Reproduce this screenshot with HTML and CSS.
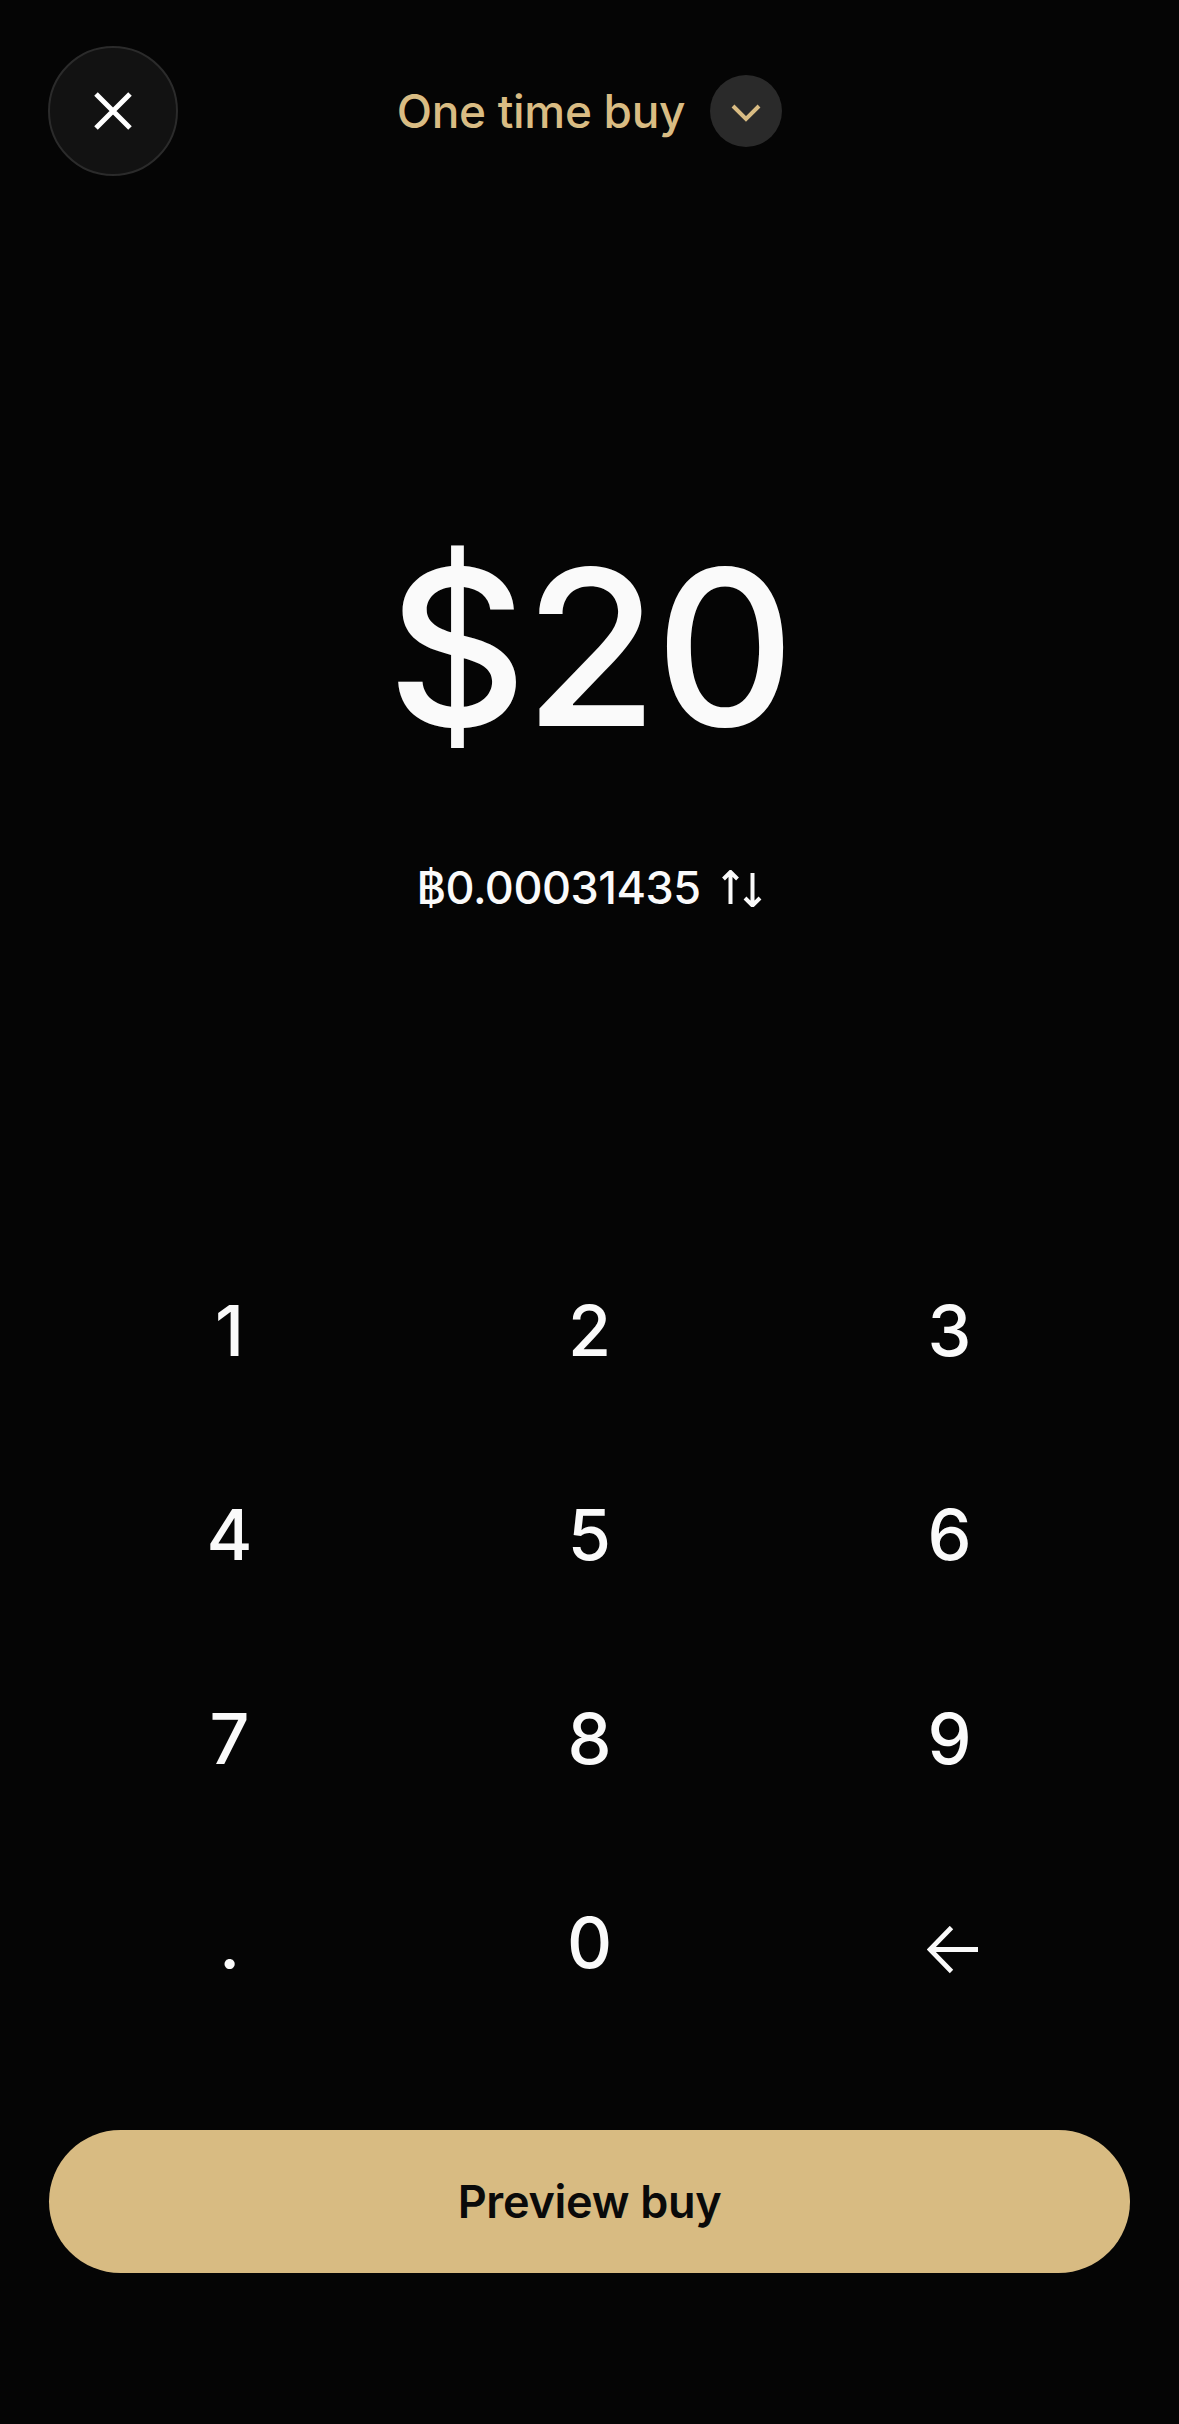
FILE: index.html
```html
<!DOCTYPE html>
<html lang="en">
<head>
<meta charset="utf-8">
<title>One time buy</title>
<link rel="stylesheet" href="styles.css">
</head>
<body>
<div class="screen">
  <header class="header">
    <button class="close" aria-label="Close">
      <svg width="40" height="40" viewBox="0 0 40 40"><path d="M3 3 L37 37 M37 3 L3 37" stroke="#fff" stroke-width="5" fill="none"/></svg>
    </button>
    <div class="title">
      <span>One time buy</span>
      <span class="chev">
        <svg width="30" height="18" viewBox="0 0 30 18"><polyline points="2,2 15,15 28,2" stroke="#d9bc83" stroke-width="4" fill="none"/></svg>
      </span>
    </div>
    <div></div>
  </header>

  <div class="amount">$20</div>

  <div class="crypto">
    <span>฿0.00031435</span>
    <svg class="swap" width="40" height="37" viewBox="0 0 40 37"><path d="M8.5 2 V34 M1.5 9 L8.5 2 L15.5 9 M30.5 3 V35 M23 28 L30.5 35.5 L38 28" stroke="#fafafa" stroke-width="4" fill="none"/></svg>
  </div>

  <div class="keypad">
    <div class="key">1</div>
    <div class="key">2</div>
    <div class="key">3</div>
    <div class="key">4</div>
    <div class="key">5</div>
    <div class="key">6</div>
    <div class="key">7</div>
    <div class="key">8</div>
    <div class="key">9</div>
    <div class="key">.</div>
    <div class="key">0</div>
    <div class="key">
      <svg class="back" width="52" height="48" viewBox="0 0 52 48"><path d="M3 23.5 H51 M24.5 1.5 L3 23.5 L24.5 45.5" stroke="#fafafa" stroke-width="4.8" fill="none"/></svg>
    </div>
  </div>

  <button class="preview">Preview buy</button>
</div>
</body>
</html>
```

FILE: styles.css
```css
html, body {
  margin: 0;
  padding: 0;
  background: #050505;
}

.screen {
  width: 1179px;
  height: 2424px;
  display: flex;
  flex-direction: column;
  font-family: Inter, "Noto Sans", "DejaVu Sans", sans-serif;
  color: #fafafa;
  box-sizing: border-box;
}

.header {
  display: grid;
  grid-template-columns: 1fr auto 1fr;
  align-items: center;
  padding: 46px 48px 0;
  height: 130px;
}

.close {
  width: 130px;
  height: 130px;
  border-radius: 50%;
  background: #121212;
  border: 2px solid #2b2b2b;
  box-sizing: border-box;
  display: flex;
  align-items: center;
  justify-content: center;
  padding: 0;
}

.title {
  display: flex;
  align-items: center;
  gap: 25px;
  color: #d9bc83;
  font-size: 46px;
  font-weight: 500;
  letter-spacing: -0.3px;
}

.chev {
  width: 72px;
  height: 72px;
  border-radius: 50%;
  background: #2a2a2a;
  display: flex;
  align-items: center;
  justify-content: center;
}

.chev svg {
  margin-top: 3px;
}

.amount {
  margin-top: 351px;
  font-size: 217px;
  line-height: 240px;
  height: 240px;
  text-align: center;
  font-weight: 500;
  letter-spacing: -3px;
}

.crypto {
  margin-top: 91px;
  height: 60px;
  display: flex;
  align-items: center;
  justify-content: center;
  gap: 22px;
  font-size: 45px;
  line-height: 60px;
  font-weight: 500;
  letter-spacing: -0.5px;
}

.keypad {
  margin: 310px auto 0;
  width: 1080px;
  display: grid;
  grid-template-columns: repeat(3, 360px);
  grid-auto-rows: 204px;
}

.key {
  display: flex;
  align-items: center;
  justify-content: center;
  font-size: 70px;
  font-weight: 500;
}

.back {
  margin-top: 16px;
  margin-left: 6px;
}

.preview {
  margin: 86px 49px 0;
  height: 143px;
  border: none;
  border-radius: 72px;
  background: #d8bb82;
  color: #0a0a0a;
  font-family: Inter, "Noto Sans", sans-serif;
  font-size: 45px;
  font-weight: 600;
  letter-spacing: -0.3px;
}
```
